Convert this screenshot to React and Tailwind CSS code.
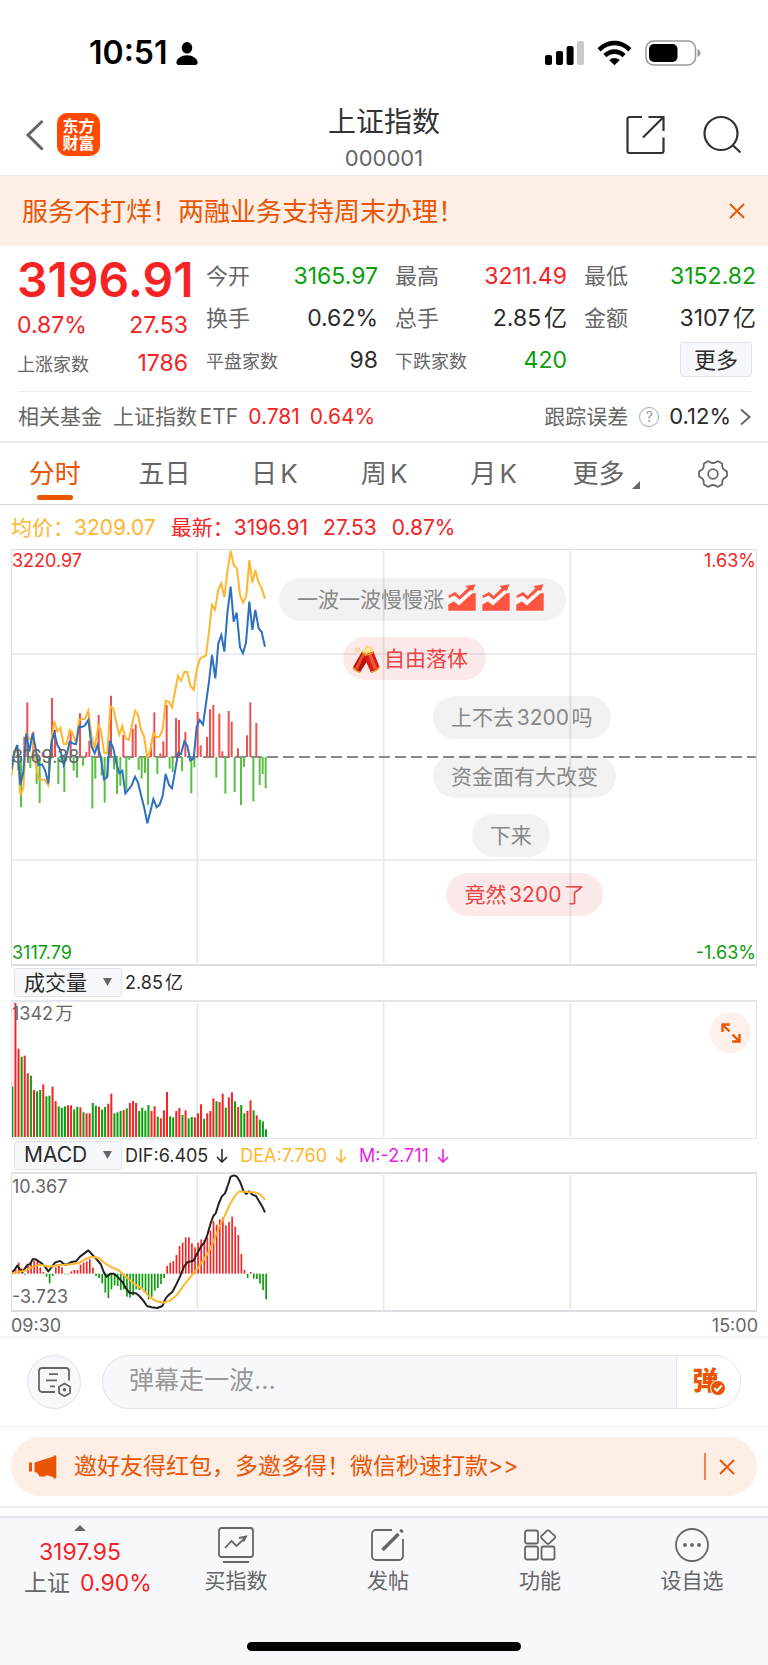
import { useState } from "react";

const UP = "#f52323";
const DOWN = "#0a9e0a";

const quoteColumns = [
  [
    { label: "今开", value: "3165.97", color: "text-[#0a9e0a]" },
    { label: "换手", value: "0.62%", color: "text-[#2b2b2b]" },
    { label: "平盘家数", value: "98", color: "text-[#2b2b2b]", small: true },
  ],
  [
    { label: "最高", value: "3211.49", color: "text-[#f52323]" },
    { label: "总手", value: "2.85亿", color: "text-[#2b2b2b]" },
    { label: "下跌家数", value: "420", color: "text-[#0a9e0a]", small: true },
  ],
  [
    { label: "最低", value: "3152.82", color: "text-[#0a9e0a]" },
    { label: "金额", value: "3107亿", color: "text-[#2b2b2b]" },
  ],
];

const tabs = ["分时", "五日", "日K", "周K", "月K"];

// All series share one x scale: 240 trading minutes across the plot width.
const BAR_X = 37;
const BAR_STEP = 9.28;

const avgLine =
  "34,830 43,765 52,745 61,885 70,865 79,700 88,716 97,716 107,790 116,838 135,840 145,856 154,720 163,664 172,694 181,684 191,732 200,732 209,690 218,700 228,730 237,660 255,656 265,632 275,710 284,745 295,675 303,690 312,758 322,760 331,620 340,626 349,668 358,704 367,678 376,714 386,720 395,680 405,632 414,645 423,690 432,708 442,775 451,750 460,698 468,712 478,710 488,690 497,602 507,606 516,622 525,575 534,528 543,542 553,516 562,516 571,558 581,570 590,510 600,476 618,466 627,395 636,315 645,330 655,268 664,250 673,292 682,215 692,152 701,195 711,206 720,285 729,308 739,288 748,180 757,248 766,210 776,248 785,265 795,296";

const priceLine =
  "34,810 43,755 52,735 61,855 70,815 79,700 88,755 98,700 107,745 116,795 126,793 135,810 145,850 154,730 163,698 172,735 181,750 191,795 200,765 209,725 218,730 228,733 237,680 246,681 255,676 265,660 275,740 284,760 293,735 303,775 312,838 321,832 330,722 340,745 349,790 358,820 367,812 376,880 386,868 395,856 405,830 414,848 423,885 432,920 442,970 451,935 460,897 470,922 479,914 488,888 497,822 507,855 516,865 525,815 534,760 543,762 553,725 562,738 571,782 581,775 590,680 599,660 609,674 618,610 627,545 636,465 646,535 655,430 664,405 673,455 682,340 692,260 701,365 710,338 720,442 729,460 738,428 748,305 757,390 766,330 776,385 785,396 795,440";

// [x, y of the far end], the near end is on the zero line
const strength = [
  [54, 810], [63, 921], [73, 710], [82, 607], [91, 804], [100, 695], [110, 852], [119, 909], [128, 757], [147, 836],
  [156, 594], [165, 690], [175, 852], [184, 785], [193, 876], [212, 695], [221, 812], [231, 833], [240, 640],
  [249, 797], [259, 756], [268, 722], [277, 925], [286, 836], [296, 645], [305, 826], [314, 908], [323, 830],
  [333, 587], [342, 808], [351, 882], [361, 858], [370, 705], [379, 870], [388, 780], [398, 686], [407, 673],
  [416, 810], [425, 836], [435, 819], [444, 915], [453, 730], [463, 637], [472, 822], [481, 760], [490, 724],
  [500, 615], [509, 806], [518, 816], [528, 654], [537, 660], [546, 814], [556, 696], [574, 880], [583, 802],
  [593, 636], [602, 736], [621, 711], [630, 628], [640, 615], [649, 833], [658, 641], [667, 754], [676, 881],
  [686, 633], [695, 665], [704, 876], [714, 745], [723, 915], [732, 801], [741, 706], [751, 607], [760, 904],
  [769, 669], [779, 855], [788, 822], [797, 865],
];

// negative = falling minute
const volumes = [
  -152, 402, 265, -241, 244, 191, -184, 141, -137, -141, 158, -122, -124, 151, 108, -92, -88, -92, 95, 95, -83, -91,
  89, -74, 71, 71, -102, -94, 91, -82, -90, 100, 130, -71, -74, -78, 81, -86, 102, 108, 102, -78, -88, -79, -96, 78,
  92, -61, 56, 80, 135, -62, -59, 78, 87, -66, 80, -56, -60, 59, 71, 98, -55, 71, 78, 116, -107, 105, 130, -88, 119,
  134, -107, 90, -96, -71, 79, 110, -80, 65, -52, -47, -23,
];

const macd = [
  5, 14, 33, 16, -3, 23, 36, 39, 36, 19, 5, -9, -29, -7, 19, 23, 19, -2, -2, 7, 11, 11, 27, 33, 37, 43, 18, -7, -13,
  -29, -57, -73, -47, -35, -37, -49, -47, -69, -72, -65, -47, -49, -43, -57, -77, -69, -51, -43, -31, -13, 23, 33, 38,
  56, 83, 93, 109, 109, 91, 79, 93, 103, 101, 109, 129, 157, 147, 163, 169, 145, 155, 171, 141, 116, 59, 11, -13, 5,
  -15, -16, -30, -49, -77,
];

const difLine =
  "34,430 43,420 52,407 60,418 68,427 75,415 83,404 90,403 98,388 107,388 116,394 125,400 135,410 145,424 154,413 165,398 175,394 183,394 190,402 200,404 214,396 228,394 240,380 265,361 275,372 290,388 302,402 312,428 320,440 332,431 342,431 355,443 367,456 378,475 388,488 397,490 408,490 418,498 430,512 441,528 455,532 472,534 487,528 497,505 507,494 517,486 528,465 540,440 552,410 562,397 580,392 592,370 604,348 613,338 622,315 632,280 640,258 647,250 656,222 665,200 675,190 684,165 692,140 702,136 711,140 720,155 730,182 739,192 747,184 757,194 768,198 778,215 788,232 795,247";

const deaLine =
  "34,431 50,426 70,424 100,410 120,404 150,410 175,405 200,404 235,400 255,388 275,380 297,384 315,400 335,412 355,420 375,438 400,460 425,475 450,502 470,514 490,518 510,512 530,496 550,468 565,448 585,425 605,398 625,368 640,335 655,298 672,262 690,222 705,197 718,184 740,186 765,187 780,193 795,209";

const bullets = [
  { text: "一波一波慢慢涨", left: 35.9, icon: "trend" },
  { text: "自由落体", left: 44.5, icon: "cracker", hot: true },
  { text: "上不去3200吗", left: 56.6 },
  { text: "资金面有大改变", left: 56.6 },
  { text: "下来", left: 61.8 },
  { text: "竟然3200了", left: 58.4, hot: true },
];

function StatusBar() {
  return (
    <div className="flex h-[90px] items-center justify-between pt-4 pr-[67px] pl-[89px] text-black">
      <div className="flex items-center gap-2">
        <span className="text-[32px] leading-9 font-semibold">10:51</span>
        <svg className="h-[23px] w-[22px]" viewBox="0 0 22 23" fill="currentColor">
          <ellipse cx="11" cy="5.8" rx="5.3" ry="5.8" />
          <path d="M0.4 20.5C0.4 16.5 5.5 13.2 11 13.2S21.6 16.5 21.6 20.5C21.6 22 20.8 22.9 19.4 22.9H2.6C1.2 22.9 0.4 22 0.4 20.5Z" />
        </svg>
      </div>
      <div className="flex items-center">
        <svg className="mr-[13px] h-[26px] w-10" viewBox="0 0 40 26">
          <rect x="1" y="15" width="7" height="10" rx="2" />
          <rect x="12" y="11" width="7" height="14" rx="2" />
          <rect x="22.600" y="6" width="7" height="19" rx="2" />
          <rect x="33" y="1" width="7" height="24" rx="2" fill="#cbcbcb" />
        </svg>
        <svg className="mr-[13px] h-[26px] w-[35px]" viewBox="0 0 35 26">
          <path d="M0.6 8.2C10 -1.8 25 -1.8 34.400 8.200L31.400 11.500C23.500 3.200 11.500 3.200 3.600 11.500Z" />
          <path d="M6.300 14C12.500 7.600 22.500 7.600 28.700 14L25.500 17.300C21 12.900 14 12.900 9.500 17.300Z" />
          <path d="M12.200 20C15.200 17.200 19.800 17.200 22.800 20L17.500 25.300Z" />
        </svg>
        <svg className="h-[26px] w-14" viewBox="0 0 56 26">
          <rect x="1" y="1" width="49.500" height="24" rx="7.500" fill="none" stroke="#9a9a9a" strokeWidth="1.500" />
          <rect x="4" y="4" width="28.500" height="18" rx="5" />
          <path d="M52.500 9V17C54.500 16.200 55.500 14.800 55.500 13S54.500 9.800 52.500 9Z" fill="#9a9a9a" />
        </svg>
      </div>
    </div>
  );
}

function Header() {
  return (
    <header className="grid h-[86px] grid-cols-[1fr_auto_1fr] items-center border-b border-[#e8e8ea] pt-1">
      <div className="flex items-center gap-[13px] pl-6">
        <button aria-label="返回">
          <svg className="h-8 w-5" viewBox="0 0 20 32" fill="none" stroke="#666" strokeWidth="3">
            <path d="M18.500 2L4 16L18.500 30.500" />
          </svg>
        </button>
        <a href="#home" className="flex h-[43px] w-[43px] flex-col items-center justify-center rounded-[10px] bg-[#ff4800] text-base leading-[17px] font-bold text-white">
          <span>东方</span>
          <span>财富</span>
        </a>
      </div>
      <div className="pt-[7px] text-center">
        <h1 className="text-[28px] leading-9 text-[#333]">上证指数</h1>
        <p className="mt-1 text-[22px] leading-7 text-[#666]">000001</p>
      </div>
      <div className="flex items-center justify-end gap-[37px] pr-[26px]">
        <button aria-label="分享">
          <svg className="h-10 w-10" viewBox="0 0 40 40" fill="none" stroke="#333" strokeWidth="2.200">
            <path d="M17 2H4.500A2 2 0 0 0 2.500 4V36A2 2 0 0 0 4.500 38H36.500A2 2 0 0 0 38.500 36V22.500M23.500 2H38.500V16M38 2.500L18 22.500" />
          </svg>
        </button>
        <button aria-label="搜索">
          <svg className="h-10 w-10" viewBox="0 0 40 40" fill="none" stroke="#333" strokeWidth="2.200">
            <circle cx="19" cy="18.500" r="16.500" />
            <path d="M30.500 30L38.500 37.500" />
          </svg>
        </button>
      </div>
    </header>
  );
}

function CloseIcon() {
  return (
    <svg className="h-4 w-4" viewBox="0 0 16 16" fill="none" stroke="currentColor" strokeWidth="1.800">
      <path d="M1 1L15 15M15 1L1 15" />
    </svg>
  );
}

function Quote() {
  return (
    <section>
      <div className="grid grid-cols-4 gap-x-[17px] pt-[9px] pr-3 pb-2 pl-[17px] text-[23px]">
        <div className="text-[#f52323]">
          <div className="text-[48px] leading-[50px] font-semibold">3196.91</div>
          <div className="flex justify-between pr-px leading-10">
            <span>0.87%</span>
            <span>27.53</span>
          </div>
          <div className="flex items-baseline justify-between pr-px leading-9">
            <span className="text-lg leading-9 text-[#666]">上涨家数</span>
            <span>1786</span>
          </div>
        </div>
        {quoteColumns.map((rows, i) => (
          <div key={i}>
            {rows.map((row) => (
              <div key={row.label} className="flex h-[42px] items-baseline justify-between leading-[42px]">
                <span className={row.small ? "text-lg leading-[42px] text-[#666]" : "text-[22px] text-[#666]"}>{row.label}</span>
                <span className={row.color}>{row.value}</span>
              </div>
            ))}
            {i === 2 && (
              <div className="flex justify-end pt-[3px] pr-1">
                <button className="h-[35px] w-[72px] rounded border border-[#dfe2e8] bg-[#f7f8fb] text-[22px] leading-8 text-[#2b2b2b]">更多</button>
              </div>
            )}
          </div>
        ))}
      </div>
      <div className="mr-[17px] ml-[18px] flex h-[50px] items-center border-t border-[#eee] text-[21px] text-[#666]">
        <span>相关基金</span>
        <a href="#etf" className="ml-[11px]">上证指数ETF</a>
        <span className="ml-[10px] text-[#f52323]">0.781</span>
        <span className="ml-[10px] text-[#f52323]">0.64%</span>
        <span className="ml-auto">跟踪误差</span>
        <button aria-label="跟踪误差说明" className="mr-[10px] ml-[11px] flex h-5 w-5 items-center justify-center rounded-full border border-[#aaa] text-sm text-[#999]">?</button>
        <span className="text-[22px] text-[#2b2b2b]">0.12%</span>
        <svg className="ml-2 h-[18px] w-3" viewBox="0 0 12 18" fill="none" stroke="#666" strokeWidth="2">
          <path d="M2 1.500L10.500 9L2 16.500" />
        </svg>
      </div>
    </section>
  );
}

function Tabs() {
  const [active, setActive] = useState("分时");
  return (
    <nav className="flex h-[64px] border-t-2 border-b border-t-[#ececee] border-b-[#d3d8e0] text-[26px] text-[#666]">
      {tabs.map((tab) => (
        <button
          key={tab}
          onClick={() => setActive(tab)}
          className={`flex flex-1 flex-col items-center justify-end gap-px pb-1 ${active === tab ? "text-[#ea5504]" : ""}`}
        >
          <span className="leading-10">{tab}</span>
          <span className={`h-[5px] w-9 rounded-full ${active === tab ? "bg-[#ea5504]" : ""}`} />
        </button>
      ))}
      <button className="flex flex-1 items-end justify-center gap-2 pb-[10px]">
        <span className="ml-[6px] leading-10">更多</span>
        <svg className="mb-[5px] h-2 w-2" viewBox="0 0 8 8" fill="#666">
          <path d="M8 0V8H0Z" />
        </svg>
      </button>
      <button aria-label="设置" className="flex flex-1 items-center justify-center">
        <svg className="h-7 w-[30px]" viewBox="0 0 30 28" fill="none" stroke="#666" strokeWidth="1.800" strokeLinejoin="round">
          <circle cx="15" cy="14" r="4.800" />
          <path d="M10 1.200C11.500 1.200 12.300 3 15 3S18.500 1.200 20 1.200L24 3.600C24.700 5 23.600 6.400 25 8.600S28.400 10.500 29 11.800V16.200C28.400 17.500 26.400 17.200 25 19.400S24.700 23 24 24.400L20 26.800C18.500 26.800 17.700 25 15 25S11.500 26.800 10 26.800L6 24.400C5.300 23 6.400 21.600 5 19.400S1.600 17.500 1 16.200V11.800C1.600 10.500 3.600 10.800 5 8.600S5.300 5 6 3.600Z" />
        </svg>
      </button>
    </nav>
  );
}

function TrendIcon() {
  return (
    <svg className="h-7 w-7" viewBox="0 0 28 28">
      <path d="M0.300 20.500L6 17.500L11 21.500L24 9.500L27.700 9V26.700H0.300Z" fill="#ff5540" />
      <path d="M1 14L0.300 11.800L7 8L11.500 12L19.500 4.300L17.500 2L27.500 0.300L24.500 8L22.200 6.200L11.700 15.800L6.500 11.500Z" fill="#ff5540" />
      <path d="M0 17.300L6.300 13.500L11.500 18L24.500 7" fill="none" stroke="#fff" strokeWidth="2.400" />
    </svg>
  );
}

function CrackerIcon() {
  return (
    <svg className="h-7 w-7" viewBox="0 0 28 28">
      <path d="M5 1.500L6.500 3.500L9 2.200L8.200 4.800L10 6.500L7 6.800L6.500 8L4.500 6.800L2 7.200L3.200 4.800L2 2.500L4.500 3.200Z" fill="#fbdcae" />
      <path d="M16 0L17.500 2.500L20 1L20.200 3.800L22.500 5L20 6.500L19 9L16 8L13 9L12.500 6.500L10.500 5L13 3.800L13.500 1Z" fill="#f9d876" />
      <circle cx="16.200" cy="4.500" r="2" fill="#fff3b0" />
      <path d="M16.500 10.500L10 6.500L0.800 22.500Q1.500 25.800 8 27.500L16.500 14Z" fill="#b5140b" />
      <path d="M13.500 8.800L10.800 7.200L2.800 23.500L5.300 25Z" fill="#ef4a30" />
      <path d="M12.500 9.500L21.500 6.500L27.500 22Q25.500 26.300 19 27.500L12.500 13.500Z" fill="#d81f12" />
      <path d="M16 9.500L19 8.300L25 23L22 24.800Z" fill="#f3573a" />
      <path d="M0.900 22.500Q3 26 8 27.500M27.400 22Q25 26 19 27.500M10 6.800Q12 8.800 14 9.300M12.500 10.200Q18 10 21.500 6.500" fill="none" stroke="#e5a52f" strokeWidth="1.500" />
    </svg>
  );
}

function Bullets() {
  return (
    <div className="absolute inset-x-0 top-[28px] flex flex-col items-start gap-4">
      {bullets.map((b) => (
        <div
          key={b.text}
          style={{ marginLeft: `${b.left}%` }}
          className={`flex h-[43px] items-center rounded-full text-[21px] ${
            b.hot ? "bg-[#e63232]/10 text-[#ec4444]" : "bg-black/5 text-[#888]"
          } ${b.icon ? (b.icon === "cracker" ? "pr-[18px] pl-[9px]" : "pr-[22px] pl-[18px]") : "px-[18px]"}`}
        >
          {b.icon === "cracker" && (
            <span className="mr-1">
              <CrackerIcon />
            </span>
          )}
          <span>{b.text}</span>
          {b.icon === "trend" && (
            <span className="ml-1 flex gap-[6px] pb-1">
              <TrendIcon />
              <TrendIcon />
              <TrendIcon />
            </span>
          )}
        </div>
      ))}
    </div>
  );
}

function Grid({ top, bottom }) {
  return (
    <g stroke="#e4e7ed" strokeWidth="5">
      {[592, 1151, 1711].map((x) => (
        <line key={x} x1={x} x2={x} y1={top} y2={bottom} />
      ))}
    </g>
  );
}

function PriceChart() {
  return (
    <div className="relative mr-[11px] ml-[11px] h-[417px] border border-b-2 border-[#dcdfe6] text-lg leading-5">
      <svg className="block h-full w-full" viewBox="36 150 2232 1242" preserveAspectRatio="none" fill="none">
        <Grid top={153} bottom={1388} />
        <g stroke="#e4e7ed" strokeWidth="5">
          <line x1="33" x2="2268" y1="462" y2="462" />
          <line x1="33" x2="2268" y1="1080" y2="1080" />
        </g>
        <line x1="33" x2="2268" y1="771" y2="771" stroke="#666" strokeWidth="5" strokeDasharray="33 15" />
        {strength.map(([x, y]) => (
          <line key={x} x1={x} x2={x} y1="771" y2={y} stroke={y < 771 ? "#ee4f4f" : "#5cbf45"} strokeWidth="6" />
        ))}
        <polyline points={avgLine} stroke="#ffb62e" strokeWidth="6" />
        <polyline points={priceLine} stroke="#2c70c0" strokeWidth="6" />
      </svg>
      <span className="absolute top-px left-0 text-[#f52323]">3220.97</span>
      <span className="absolute top-px right-0 text-[#f52323]">1.63%</span>
      <span className="absolute top-[197px] left-0 text-[#666]">3169.38</span>
      <span className="absolute bottom-px left-0 text-[#0a9e0a]">3117.79</span>
      <span className="absolute right-0 bottom-px text-[#0a9e0a]">-1.63%</span>
      <Bullets />
    </div>
  );
}

function IndicatorSelect({ label, options }) {
  return (
    <div className="relative mr-[3px]">
      <select aria-label={label} className="h-[29px] w-[108px] appearance-none rounded border border-[#dfe2e8] bg-[#f7f8fb] pl-[9px] text-[21px] leading-6 text-[#2b2b2b]">
        {options.map((o) => (
          <option key={o}>{o}</option>
        ))}
      </select>
      <svg className="pointer-events-none absolute top-[10px] right-[10px] h-2 w-[9px]" viewBox="0 0 9 8" fill="#666">
        <path d="M0 0H9L4.500 8Z" />
      </svg>
    </div>
  );
}

function VolumeChart() {
  return (
    <div className="relative mr-[11px] ml-[11px] h-[139px] border border-t-2 border-[#e3e6ec] text-lg leading-5">
      <svg className="block h-full w-full" viewBox="36 213 2232 408" preserveAspectRatio="none">
        <Grid top={216} bottom={618} />
        {volumes.map((v, i) => (
          <rect key={i} x={BAR_X + i * BAR_STEP - 3} y={618 - Math.abs(v)} width="6" height={Math.abs(v)} fill={v > 0 ? UP : DOWN} />
        ))}
      </svg>
      <span className="absolute top-[2px] left-0 text-[#666]">1342万</span>
      <button aria-label="全屏" className="absolute top-[10px] right-[5px] flex h-[41px] w-[41px] items-center justify-center rounded-full bg-[#fdf0ea]">
        <svg className="h-5 w-5" viewBox="0 0 20 20" fill="none" stroke="#ea5504" strokeWidth="2.400">
          <path d="M8.800 1.500H1.500V9M1.500 1.500L8.500 8.500M11.200 18.500H18.500V11M18.500 18.500L11.500 11.500" />
        </svg>
      </button>
    </div>
  );
}

function MacdChart() {
  return (
    <div className="relative mr-[11px] ml-[11px] h-[140px] border border-y-2 border-[#dcdfe6] text-lg leading-5">
      <svg className="block h-full w-full" viewBox="36 132 2232 408" preserveAspectRatio="none" fill="none">
        <Grid top={135} bottom={537} />
        {macd.map((v, i) => (
          <rect key={i} x={BAR_X + i * BAR_STEP - 2} y={v > 0 ? 431 - v : 431} width="5" height={Math.abs(v)} fill={v > 0 ? UP : DOWN} />
        ))}
        <polyline points={difLine} stroke="#222" strokeWidth="6" strokeLinejoin="round" />
        <polyline points={deaLine} stroke="#ffb62e" strokeWidth="6" strokeLinejoin="round" />
      </svg>
      <span className="absolute top-[3px] left-0 text-[#666]">10.367</span>
      <span className="absolute bottom-[3px] left-0 text-[#666]">-3.723</span>
    </div>
  );
}

function ArrowDown() {
  return (
    <svg className="h-[14px] w-3" viewBox="0 0 12 14" fill="none" stroke="currentColor" strokeWidth="1.600">
      <path d="M6 0V13M1 8L6 13L11 8" />
    </svg>
  );
}

function CommentBar() {
  return (
    <div className="flex h-[91px] items-center gap-[21px] border-t-2 border-b border-[#f1f1f3] pr-[27px] pl-[27px]">
      <button aria-label="弹幕设置" className="flex h-[54px] w-[54px] shrink-0 items-center justify-center rounded-full border border-[#dfe2e8] bg-[#f7f8fb]">
        <svg className="h-[30px] w-[33px]" viewBox="0 0 33 30" fill="none" stroke="#666" strokeWidth="1.800">
          <path d="M17 25H4A3 3 0 0 1 1 22V4A3 3 0 0 1 4 1H28A3 3 0 0 1 31 4V13.500" />
          <path d="M11 7.200H20M8 13.300H19M12 19.300H17" />
          <path d="M26.500 16.500L32 19.700V26L26.500 29.200L21 26V19.700Z" />
          <circle cx="26.500" cy="22.800" r="1.800" fill="#666" stroke="none" />
        </svg>
      </button>
      <div className="flex h-[54px] min-w-0 flex-1 overflow-hidden rounded-full border border-[#dfe2e8] bg-[#f7f8fb]">
        <input aria-label="弹幕" placeholder="弹幕走一波..." className="min-w-0 flex-1 pb-[2px] pl-[26px] text-[25px] outline-none placeholder:text-[#999]" />
        <button aria-label="弹幕开关" className="w-[64px] border-l border-[#dfe2e8] bg-white pr-[6px] pb-[2px]">
          <span className="relative text-[26px] leading-10 font-black text-[#ea5504]">
            弹
            <svg className="absolute -right-[7px] bottom-0 h-4 w-4" viewBox="0 0 16 16">
              <circle cx="8" cy="8" r="7.500" fill="#ea5504" stroke="#fff" />
              <path d="M4.300 8L7 10.700L11.800 5.500" fill="none" stroke="#fff" strokeWidth="2" />
            </svg>
          </span>
        </button>
      </div>
    </div>
  );
}

function Promo() {
  return (
    <div className="border-b-2 border-[#ececee] px-[11px] pt-[10px] pb-[10px]">
      <div className="flex h-[59px] items-center rounded-full bg-[#fdeee6] pr-[22px] pl-[18px] text-[#ea5504]">
        <svg className="h-6 w-7" viewBox="0 0 28 24" fill="currentColor">
          <path d="M0 7.500H3V16.500H0ZM5.500 7.500L24.500 1.500V0.500H27.300V23.500H24.500V22.200L17.500 20L16.500 21.500H10.500L8.500 18L5.500 17Z" />
        </svg>
        <a href="#invite" className="ml-[17px] text-[23px]">邀好友得红包，多邀多得！微信秒速打款&gt;&gt;</a>
        <span className="mr-[13px] ml-auto h-[27px] w-[2px] bg-[#f2834b]" />
        <button aria-label="关闭推广">
          <CloseIcon />
        </button>
      </div>
    </div>
  );
}

const navItems = [
  {
    label: "买指数",
    icon: (
      <>
        <rect x="1" y="1" width="34" height="29" rx="2.500" />
        <path d="M7 21L13.500 14L18.500 19L27.500 10.500M21 11L28 9.500L25.500 14.500M5 35H31" />
      </>
    ),
  },
  {
    label: "发帖",
    icon: (
      <>
        <path d="M22 3H6A4 4 0 0 0 2 7V29A4 4 0 0 0 6 33H29A4 4 0 0 0 33 29V12" />
        <path d="M12.500 23L28.500 7M30.500 5L32.500 3" strokeWidth="3.500" />
      </>
    ),
  },
  {
    label: "功能",
    icon: (
      <>
        <rect x="3" y="3.500" width="13" height="13" rx="2" />
        <rect x="3" y="19.500" width="13" height="13" rx="2" />
        <rect x="19.500" y="19.500" width="13" height="13" rx="2" />
        <path d="M25 3.600Q26 2.800 27 3.600L33 9.200Q33.600 10 33 10.800L27 16.600Q26 17.300 25 16.600L19.300 10.800Q18.700 10 19.300 9.200Z" />
      </>
    ),
  },
  {
    label: "设自选",
    icon: (
      <>
        <circle cx="18" cy="18" r="16" />
        <g fill="#666" stroke="none">
          <circle cx="11" cy="18" r="1.900" />
          <circle cx="18" cy="18" r="1.900" />
          <circle cx="25" cy="18" r="1.900" />
        </g>
      </>
    ),
  },
];

function BottomNav() {
  return (
    <footer className="mt-2 border-t-2 border-[#e3e5e8] bg-[#f7f8fb] text-[#666]">
      <nav className="flex h-[124px]">
        <a href="#index" className="flex w-40 flex-col items-center pt-[7px] text-[23px] leading-[31px]">
          <svg className="mb-[6px] h-[6px] w-3" viewBox="0 0 12 6" fill="#666">
            <path d="M6 0L12 6H0Z" />
          </svg>
          <span className="text-[#f52323]">3197.95</span>
          <span className="flex gap-[10px] pl-4">
            <span>上证</span>
            <span className="text-[#f52323]">0.90%</span>
          </span>
        </a>
        {navItems.map((item) => (
          <a key={item.label} href="#more" className="flex flex-1 flex-col items-center gap-[2px] pt-[9px] text-[21px] leading-8">
            <svg className="h-9 w-9" viewBox="0 0 36 36" fill="none" stroke="#666" strokeWidth="1.800">
              {item.icon}
            </svg>
            <span>{item.label}</span>
          </a>
        ))}
      </nav>
      <div className="flex justify-center pb-[15px]">
        <div className="h-[9px] w-[274px] rounded-full bg-black" />
      </div>
    </footer>
  );
}

export default function App() {
  const [showNotice, setShowNotice] = useState(true);

  return (
    <div className="min-h-screen w-full bg-white font-['Inter','Noto_Sans_CJK_SC',sans-serif] text-[#333] [text-autospace:normal]">
      <StatusBar />
      <Header />
      {showNotice && (
        <div className="flex h-[70px] items-center justify-between bg-[#fdeee6] pr-[23px] pl-[22px] text-[#ea5504]">
          <a href="#notice" className="text-[26px]">服务不打烊！两融业务支持周末办理！</a>
          <button aria-label="关闭" onClick={() => setShowNotice(false)}>
            <CloseIcon />
          </button>
        </div>
      )}
      <Quote />
      <Tabs />
      <div className="flex h-11 items-center gap-[15px] pt-[2px] pl-[11px] text-[21px] text-[#f52323]">
        <span className="text-[#ffb62e]">均价：3209.07</span>
        <span>最新：3196.91</span>
        <span>27.53</span>
        <span>0.87%</span>
      </div>
      <PriceChart />
      <div className="flex h-[34px] items-center pl-[14px] text-lg text-[#2b2b2b]">
        <IndicatorSelect label="副图一指标" options={["成交量", "量比", "MACD"]} />
        <span>2.85亿</span>
      </div>
      <VolumeChart />
      <div className="flex h-[33px] items-center pl-[14px] text-lg">
        <IndicatorSelect label="副图二指标" options={["MACD", "KDJ", "RSI"]} />
        <span className="flex items-center gap-2 text-[#2b2b2b]">
          DIF:6.405 <ArrowDown />
        </span>
        <span className="ml-3 flex items-center gap-2 text-[#ffb62e]">
          DEA:7.760 <ArrowDown />
        </span>
        <span className="ml-3 flex items-center gap-2 text-[#e81ee8]">
          M:-2.711 <ArrowDown />
        </span>
      </div>
      <MacdChart />
      <div className="flex h-6 items-center justify-between pt-1 pr-[10px] pl-[11px] text-lg leading-5 text-[#666]">
        <span>09:30</span>
        <span>15:00</span>
      </div>
      <CommentBar />
      <Promo />
      <BottomNav />
    </div>
  );
}
